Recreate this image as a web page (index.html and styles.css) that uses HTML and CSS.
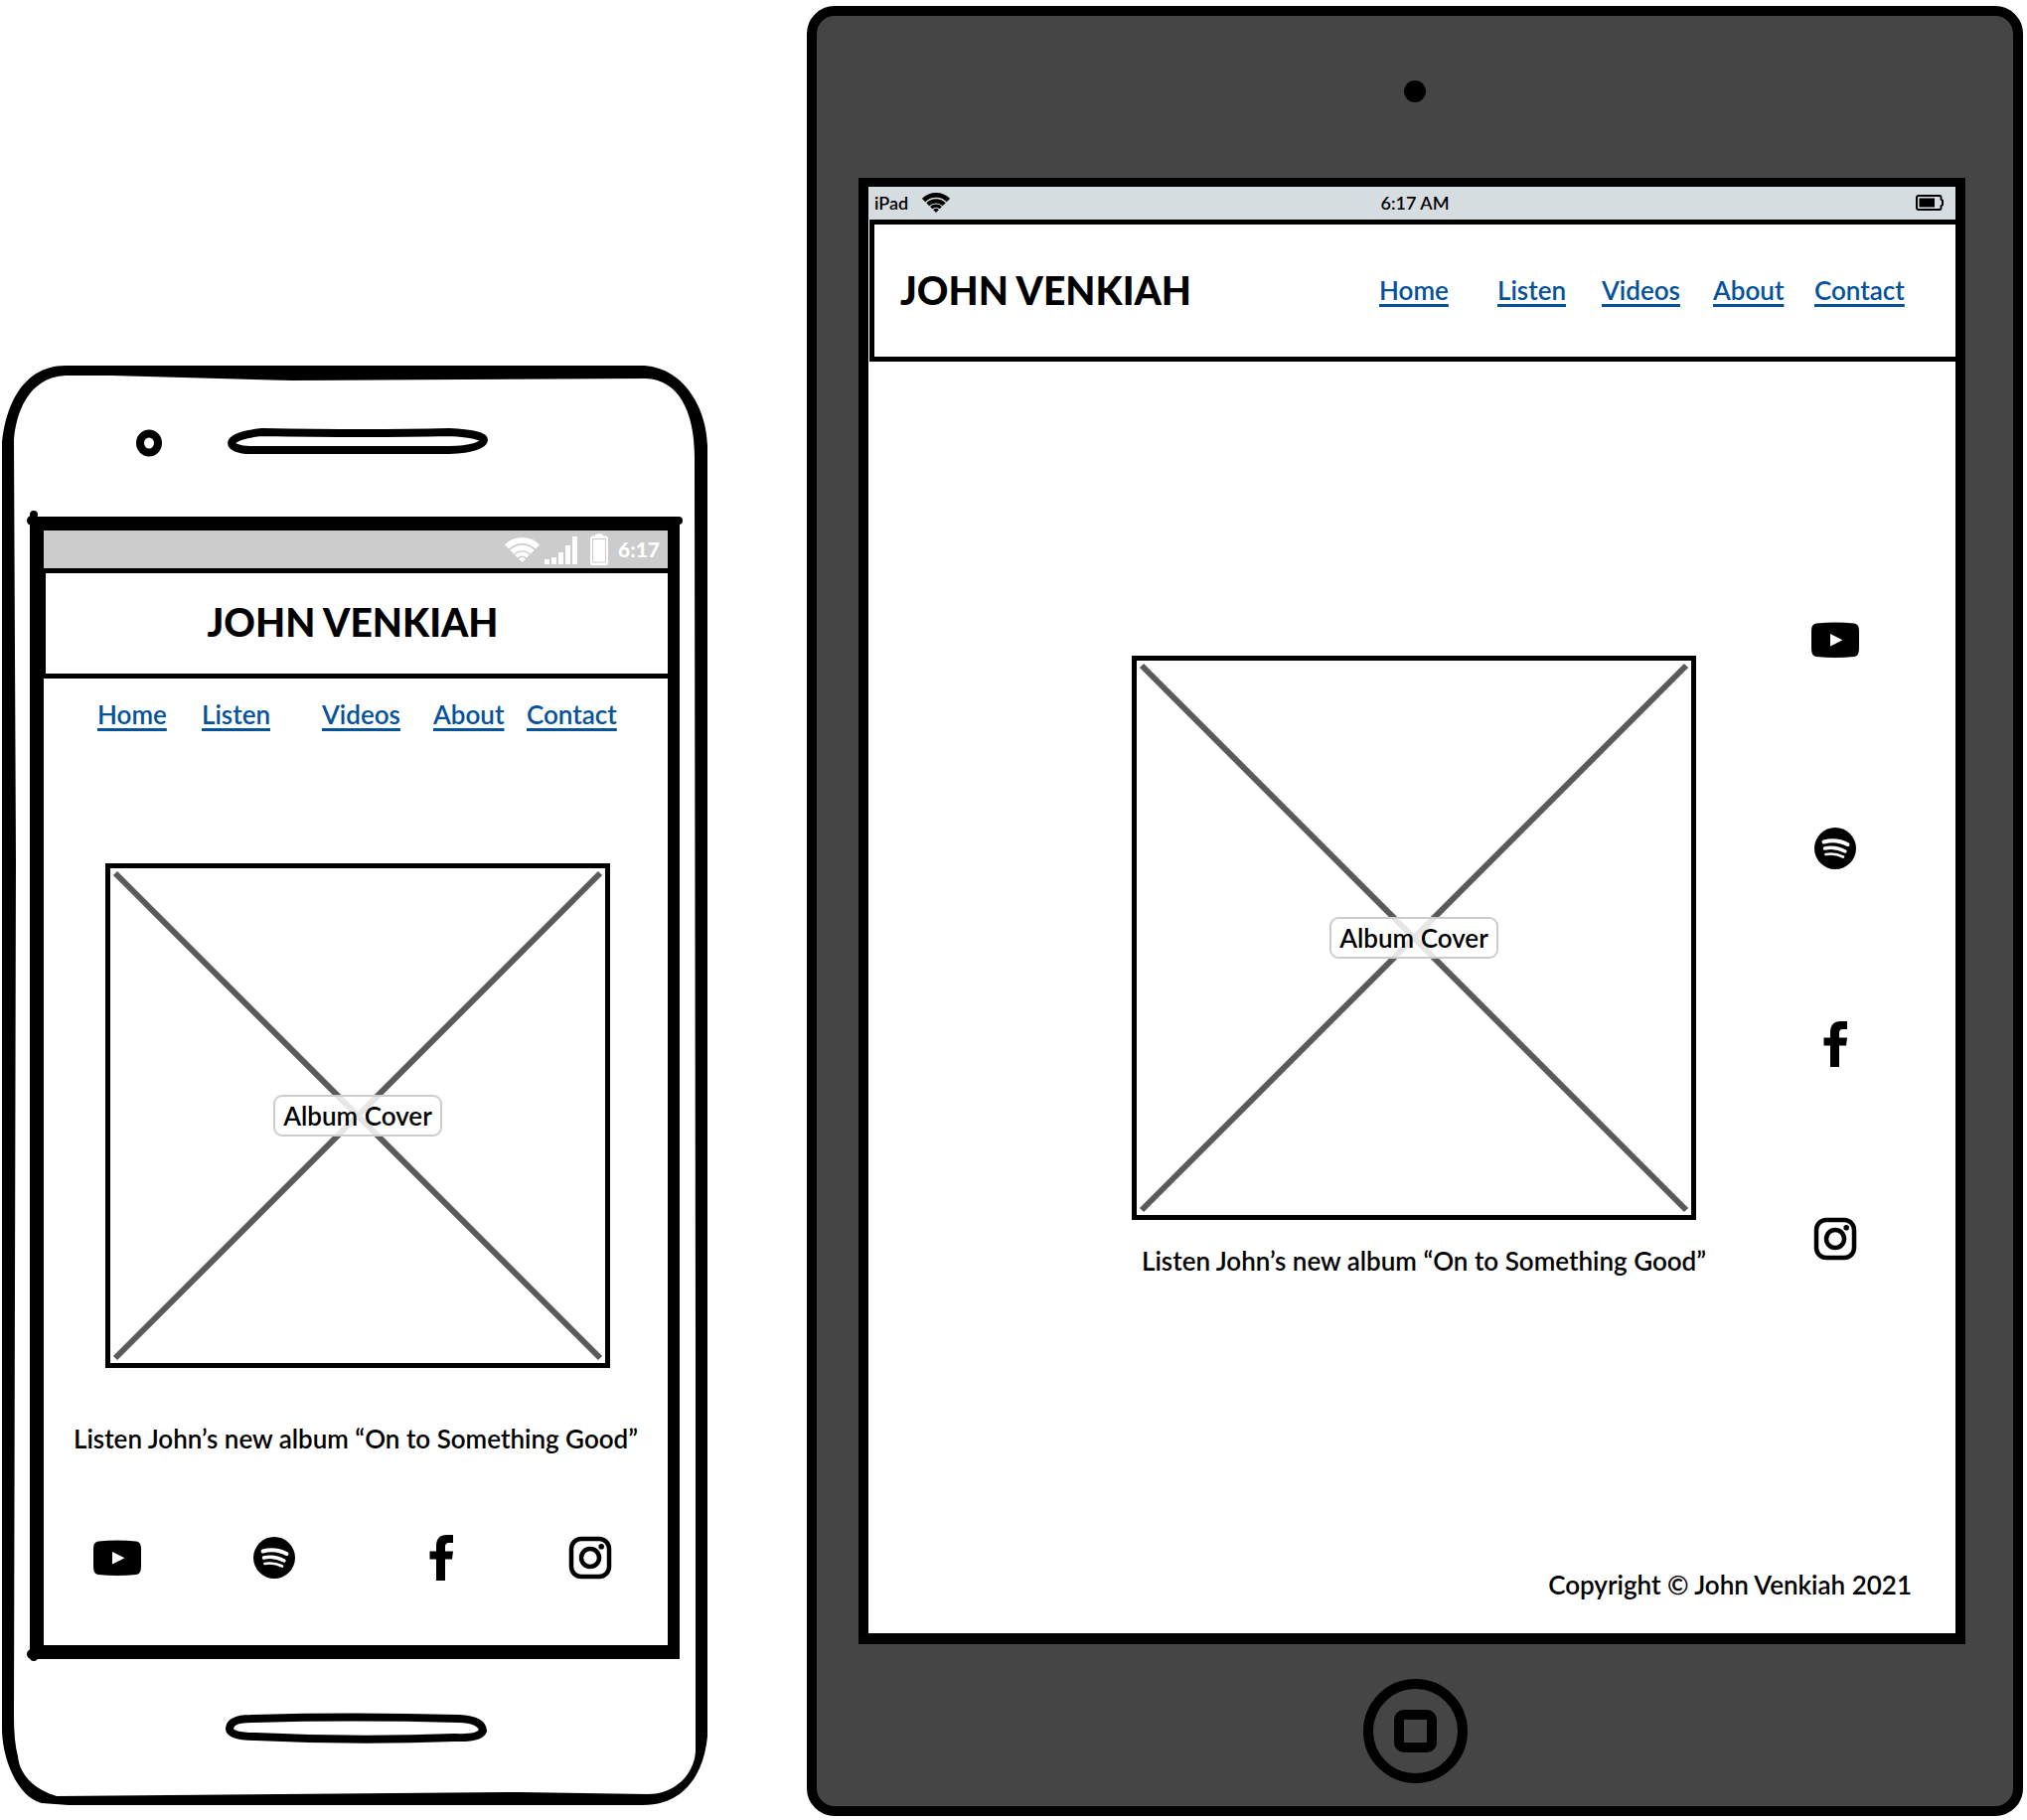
FILE: index.html
```html
<!DOCTYPE html>
<html lang="en">
<head>
<meta charset="utf-8">
<meta name="viewport" content="width=device-width, initial-scale=1">
<title>John Venkiah – Home wireframes</title>
<link rel="stylesheet" href="styles.css">
</head>
<body>
<svg class="sprite" aria-hidden="true">
  <symbol id="youtube" viewBox="0 0 48 48">
    <path fill-rule="evenodd" d="M5 7.5Q24 5.500 43 7.500Q47 8 47.700 12Q49 24 47.700 36Q47 40.500 43 41Q24 43 5 41Q1 40.500 .3 36Q-1 24 .3 12Q1 8 5 7.500ZM19 18V30.500L31.500 24.200Z"/>
  </symbol>
  <symbol id="spotify" viewBox="0 0 48 48">
    <circle cx="24" cy="24" r="21"/>
    <g fill="none" stroke="#fff" stroke-linecap="round">
      <path stroke-width="4" d="M12.500 17.500Q25 14 36.500 20"/>
      <path stroke-width="3.400" d="M13.500 24Q24 21.500 34 27"/>
      <path stroke-width="2.700" d="M14.500 30Q23.500 28.300 32 32.500"/>
    </g>
  </symbol>
  <symbol id="facebook" viewBox="0 0 48 48">
    <path d="M19 47V25.500H12.500V17.500H19V12.500Q19 1 29.500 1H36V9H31.500Q28 9 28 13V17.500H36L35 25.500H28V47Z"/>
  </symbol>
  <symbol id="instagram" viewBox="0 0 48 48">
    <rect x="5" y="5" width="38" height="38" rx="10" fill="none" stroke="#000" stroke-width="4.500"/>
    <circle cx="24" cy="24" r="9" fill="none" stroke="#000" stroke-width="4.500"/>
    <circle cx="35.200" cy="12.800" r="2.800"/>
  </symbol>
  <symbol id="wifi" viewBox="0 0 35 25">
    <g fill="none" stroke="currentColor">
      <path stroke-width="6" d="M1.950 9.450A22 22 0 0 1 33.050 9.450"/>
      <path stroke-width="5.500" d="M7.250 14.750A14.500 14.500 0 0 1 27.750 14.750"/>
      <path stroke-width="4" d="M11.500 19A8.500 8.500 0 0 1 23.500 19"/>
    </g>
    <path fill="currentColor" d="M17.500 25L14 21.500A5 5 0 0 1 21 21.500Z"/>
  </symbol>
</svg>

<main class="board">
  <section class="phone" aria-label="Phone layout">
    <svg class="phone-shell" viewBox="0 0 710 1449" preserveAspectRatio="none" aria-hidden="true">
      <path fill-rule="evenodd" d="M64 0H643C685 0 709 42 710 80V1380C706 1420 685 1449 645 1449H67L40 1447C14 1440 0 1400 0 1372V80C2 50 16 0 64 0ZM64 10H110L292 15L648 13C680 14 697 45 697 92L698 1000V1395C697 1415 680 1438 650 1438L520 1436L55 1440C30 1432 18 1418 16 1400Q12 1385 12 1360L14 500L12 75C14 50 25 12 64 10Z"/>
      <g fill="none" stroke="#000">
        <ellipse cx="148" cy="78" rx="9" ry="9.500" stroke-width="8"/>
        <path stroke-width="8" d="M262 67Q370 69 450 67Q485 69 485 75Q483 84 450 85H250C226 85 220 71 262 67Z"/>
        <path stroke-width="8" d="M250 1362Q355 1359 460 1362Q483 1363 484 1374Q481 1382 456 1381Q355 1385 255 1380Q229 1380 229 1372Q230 1362 250 1362Z"/>
      </g>
      <circle cx="32" cy="150" r="4"/><circle cx="30" cy="156" r="5"/>
      <circle cx="681" cy="156" r="4"/>
      <circle cx="30" cy="1297" r="5"/><circle cx="32" cy="1300" r="4"/>
    </svg>
    <div class="phone-screen">
      <div class="phone-status">
        <svg class="phone-wifi" aria-hidden="true"><use href="#wifi"/></svg>
        <svg class="phone-signal" viewBox="0 0 33 29" aria-hidden="true">
          <path d="M0 24H5V29H0ZM7 22H12V29H7ZM14 17H19V29H14ZM21 10H26V29H21ZM28 1H33V29H28Z"/>
        </svg>
        <svg class="phone-battery" viewBox="0 0 18 32" aria-hidden="true">
          <path fill-rule="evenodd" d="M5 1Q9-.5 13 1V2.500H16Q18 3 18 5V30Q18 32 16 32H2Q0 32 0 30V5Q0 3 2 2.500H5ZM2 5V29.500H16V5ZM3 6H15V28.500H3Z"/>
        </svg>
        <span>6:17</span>
      </div>
      <header class="phone-header"><h1 class="brand">JOHN VENKIAH</h1></header>
      <nav class="phone-nav" aria-label="Phone menu">
        <a href="#">Home</a><a href="#">Listen</a><a href="#">Videos</a><a href="#">About</a><a href="#">Contact</a>
      </nav>
      <figure class="phone-figure">
        <div class="cover">
          <svg class="cross" aria-hidden="true"><line x1="0" y1="0" x2="100%" y2="100%"/><line x1="100%" y1="0" x2="0" y2="100%"/></svg>
          <span class="cover-label">Album Cover</span>
        </div>
        <figcaption>Listen John’s new album “On to Something Good”</figcaption>
      </figure>
      <div class="phone-social">
        <a href="#" aria-label="YouTube"><svg class="icon"><use href="#youtube"/></svg></a>
        <a href="#" aria-label="Spotify"><svg class="icon"><use href="#spotify"/></svg></a>
        <a href="#" aria-label="Facebook"><svg class="icon"><use href="#facebook"/></svg></a>
        <a href="#" aria-label="Instagram"><svg class="icon"><use href="#instagram"/></svg></a>
      </div>
    </div>
  </section>

  <section class="tablet" aria-label="Tablet layout">
    <div class="tablet-top"><span class="lens"></span></div>
    <div class="tablet-screen">
      <div class="tablet-status">
        <span class="carrier">iPad <svg class="tablet-wifi" aria-hidden="true"><use href="#wifi"/></svg></span>
        <span class="clock">6:17 AM</span>
        <svg class="tablet-battery" viewBox="0 0 28 16" aria-hidden="true">
          <path fill="none" stroke="#000" stroke-width="2" d="M3 1H24Q25.500 1 25.500 3V4.500L27 6V10L25.500 11.500V13Q25.500 15 24 15H3Q1 15 1 13V3Q1 1 3 1Z"/>
          <path d="M3.500 3.500H19V12.500H3.500Z"/>
        </svg>
      </div>
      <header class="tablet-header">
        <h1 class="brand">JOHN VENKIAH</h1>
        <nav class="tablet-nav" aria-label="Tablet menu">
          <a href="#">Home</a><a href="#">Listen</a><a href="#">Videos</a><a href="#">About</a><a href="#">Contact</a>
        </nav>
      </header>
      <div class="tablet-body">
        <figure class="tablet-figure">
          <div class="cover">
            <svg class="cross" aria-hidden="true"><line x1="0" y1="0" x2="100%" y2="100%"/><line x1="100%" y1="0" x2="0" y2="100%"/></svg>
            <span class="cover-label">Album Cover</span>
          </div>
          <figcaption>Listen John’s new album “On to Something Good”</figcaption>
        </figure>
        <div class="tablet-social">
          <a href="#" aria-label="YouTube"><svg class="icon"><use href="#youtube"/></svg></a>
          <a href="#" aria-label="Spotify"><svg class="icon"><use href="#spotify"/></svg></a>
          <a href="#" aria-label="Facebook"><svg class="icon"><use href="#facebook"/></svg></a>
          <a href="#" aria-label="Instagram"><svg class="icon"><use href="#instagram"/></svg></a>
        </div>
      </div>
      <footer class="tablet-footer">Copyright © John Venkiah 2021</footer>
    </div>
    <div class="tablet-bottom"><button class="home-button" type="button" aria-label="Home button"><span></span></button></div>
  </section>
</main>
</body>
</html>
```
FILE: styles.css
```css
* { box-sizing: border-box; }

body {
  margin: 0;
  background: #fff;
  color: #000;
  font: 600 26px/32px Lato, "Liberation Sans", sans-serif;
}

h1, figure { margin: 0; }
svg { display: block; }
.sprite { position: absolute; width: 0; height: 0; }

.board {
  display: grid;
  grid-template-columns: 710fr 1224fr;
  gap: 100px;
  align-items: end;
  padding: 6px 4px 4px 2px;
}

.brand { font-size: 39px; line-height: 48px; font-weight: 900; white-space: nowrap; }
.icon { width: 48px; height: 48px; }
figcaption { white-space: nowrap; }

nav a {
  justify-self: start;
  color: #045299;
  text-decoration: underline 3px;
  text-decoration-skip-ink: none;
  text-underline-offset: 4px;
}

/* Album placeholder */
.cover {
  position: relative;
  display: flex;
  align-items: center;
  justify-content: center;
  aspect-ratio: 1;
  border: 5px solid #000;
}
.cross {
  position: absolute;
  inset: 5px;
  width: calc(100% - 10px);
  height: calc(100% - 10px);
  overflow: visible;
  stroke: #5a5a5c;
  stroke-width: 6px;
}
.cover-label {
  position: relative;
  padding: 3px 8px;
  border: 2px solid #ccc;
  border-radius: 9px;
  background: rgba(255, 255, 255, .85);
}

/* Phone */
.phone {
  position: relative;
  margin-bottom: 11px;
  padding: 152px 28px 147px;
}
.phone-shell { position: absolute; inset: 0; width: 100%; height: 100%; }
.phone-screen {
  position: relative;
  padding-bottom: 64px;
  border: 14px solid #000;
  border-right-width: 12px;
  background: #fff;
}
.phone-status {
  display: flex;
  align-items: center;
  justify-content: flex-end;
  height: 38px;
  padding-right: 8px;
  background: #ccc;
  color: #fff;
  fill: #fff;
  font-size: 21px;
  font-weight: 900;
}
.phone-wifi { width: 35px; height: 25px; margin-right: 5px; }
.phone-signal { width: 33px; height: 29px; margin-right: 13px; }
.phone-battery { width: 18px; height: 32px; margin-right: 10px; }
.phone-header {
  display: flex;
  align-items: center;
  justify-content: center;
  min-height: 111px;
  padding: 0 8px 4px 0;
  border: solid #000;
  border-width: 5px 0 5px 2px;
}
.phone-nav {
  display: grid;
  grid-template-columns: 105fr 121fr 112fr 94fr 90px;
  padding: 20px 52px 0 54px;
}
.phone-figure { padding-top: 134px; text-align: center; }
.phone-figure .cover { margin: 0 58px 55px 62px; }
.phone-social {
  display: grid;
  grid-template-columns: 158fr 168fr 150fr 48px;
  padding: 80px 54px 0 50px;
}

/* Tablet */
.tablet {
  border: 10px solid #000;
  border-radius: 28px;
  background: #454545;
}
.tablet-top { display: flex; justify-content: center; padding: 65px 0 76px; }
.lens { width: 22px; height: 22px; border-radius: 50%; background: #000; }
.tablet-screen {
  margin: 0 48px 0 42px;
  border: 10px solid #000;
  border-width: 9px 10px 11px;
  background: #fff;
}
.tablet-status {
  display: grid;
  grid-template-columns: 1fr auto 1fr;
  align-items: center;
  height: 33px;
  padding: 0 12px 2px 6px;
  background: #d6dde1;
  font-size: 18px;
}
.carrier { display: flex; align-items: center; gap: 14px; }
.clock { padding-left: 12px; }
.tablet-wifi { width: 28px; height: 20px; }
.tablet-battery { justify-self: end; width: 28px; height: 16px; }
.tablet-header {
  display: flex;
  align-items: center;
  justify-content: space-between;
  min-height: 143px;
  margin-left: 1px;
  padding: 0 52px 2px 26px;
  border: 5px solid #000;
  border-right: 0;
}
.tablet-nav {
  display: grid;
  grid-template-columns: 119px 105px 112px 102px 90px;
}
.tablet-body {
  display: grid;
  grid-template-columns: 1fr 568px 1fr;
  align-items: start;
  padding-left: 4px;
}
.tablet-figure { grid-column: 2; padding-top: 296px; }
.tablet-figure .cover { margin-bottom: 25px; }
.tablet-figure figcaption { padding-left: 10px; }
.tablet-social {
  display: grid;
  grid-template-rows: 210px 197px 196px 48px;
  justify-content: center;
  padding: 256px 0 0 18px;
}
.tablet-footer { padding: 294px 44px 33px; text-align: right; }
.tablet-bottom { display: flex; justify-content: center; padding: 35px 0 23px; }
.home-button {
  display: flex;
  align-items: center;
  justify-content: center;
  width: 105px;
  height: 105px;
  padding: 0;
  border: 10px solid #000;
  border-radius: 50%;
  background: transparent;
}
.home-button span {
  width: 43px;
  height: 43px;
  border: 10px solid #000;
  border-radius: 10px;
}
```
